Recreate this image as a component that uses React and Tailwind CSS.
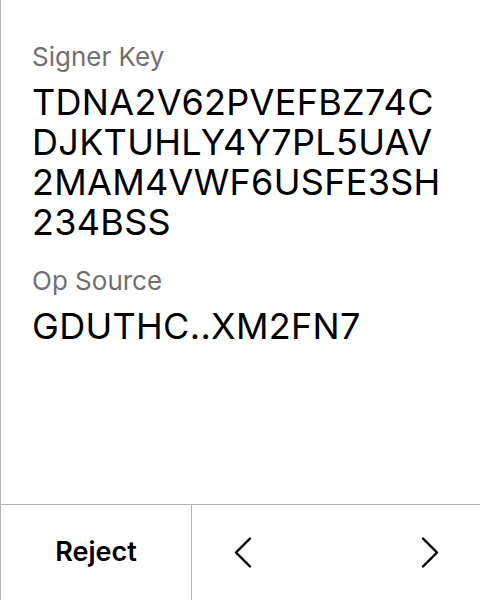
export default function App() {
  return (
    <div className="w-[480px] h-[600px] bg-white border-l border-[#b3b3b3] flex flex-col" style={{ fontFamily: "Inter, 'Liberation Sans', sans-serif" }}>
      <div className="flex-1 pl-[31px] pr-[20px] pt-[41px]">
        <div className="text-[26px] leading-[32px] text-[#707070]">Signer Key</div>
        <div className="mt-[9px] text-[36px] leading-[40px] text-black tracking-[0.3px]">
          <div>TDNA2V62PVEFBZ74C</div>
          <div>DJKTUHLY4Y7PL5UAV</div>
          <div>2MAM4VWF6USFE3SH</div>
          <div>234BSS</div>
        </div>
        <div className="mt-[23px] text-[26px] leading-[32px] text-[#707070]">Op Source</div>
        <div className="mt-[9px] text-[36px] leading-[40px] text-black tracking-[0.3px]">GDUTHC..XM2FN7</div>
      </div>
      <div className="h-[96px] border-t border-[#b3b3b3] flex">
        <div className="w-[191px] border-r border-[#b3b3b3] flex items-center justify-center text-[27px] font-semibold text-black">Reject</div>
        <div className="flex-1 flex items-center justify-between pl-[42px] pr-[41px]">
          <svg width="18" height="31" viewBox="0 0 18 31" fill="none" stroke="black" strokeWidth="2.4" strokeLinecap="round" strokeLinejoin="round">
            <path d="M16 1.5 L2 15.5 L16 29.5" />
          </svg>
          <svg width="18" height="31" viewBox="0 0 18 31" fill="none" stroke="black" strokeWidth="2.4" strokeLinecap="round" strokeLinejoin="round">
            <path d="M2 1.5 L16 15.5 L2 29.5" />
          </svg>
        </div>
      </div>
    </div>
  );
}
